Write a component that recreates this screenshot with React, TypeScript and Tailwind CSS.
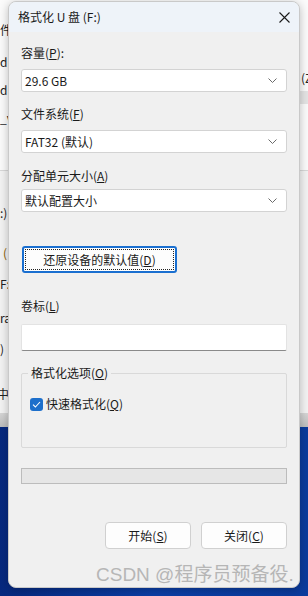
import React from "react";

const font = { fontFamily: '"Noto Sans CJK SC", "Noto Sans", sans-serif' };

function Chevron() {
  return (
    <svg width="9" height="5" viewBox="0 0 9 5" className="shrink-0">
      <path d="M0.5 0.5 L4.5 4.5 L8.5 0.5" fill="none" stroke="#6a6a6a" strokeWidth="1" />
    </svg>
  );
}

function Combo({ children }: { children: React.ReactNode }) {
  return (
    <div className="h-[23px] mx-[12px] bg-white border border-[#d3d3d3] rounded-[3px] flex items-center justify-between pl-[3px] pr-[9px] text-[12px] text-[#1a1a1a]">
      <span>{children}</span>
      <Chevron />
    </div>
  );
}

function Label({ children }: { children: React.ReactNode }) {
  return <div className="mx-[12px] text-[12px] text-[#1a1a1a] leading-[16px]">{children}</div>;
}

export default function App() {
  return (
    <div className="relative w-[308px] h-[596px] overflow-hidden" style={font}>
      {/* background: explorer window */}
      <div className="absolute inset-0 flex flex-col">
        <div className="h-[170px] bg-[#fbfbfb]" />
        <div className="h-[1px] bg-[#d8d8d8]" />
        <div className="h-[242px] bg-[#f3f3f3]" />
        <div className="h-[14px] bg-gradient-to-b from-[#d6d6d6] to-[#bdbdbd]" />
        <div className="flex-1 bg-gradient-to-r from-[#06287e] via-[#0b3ea6] to-[#0a3a9c]" />
      </div>
      {/* background text fragments */}
      <div className="absolute left-0 top-[22px] text-[12px] text-[#222] leading-[16px]">件</div>
      <div className="absolute left-0 top-[54px] text-[12px] text-[#222] leading-[16px]">dr</div>
      <div className="absolute left-0 top-[82px] text-[12px] text-[#222] leading-[16px]">dr</div>
      <div className="absolute left-0 top-[110px] text-[12px] text-[#222] leading-[16px]">_v</div>
      <div className="absolute left-0 top-[205px] text-[12px] text-[#222] leading-[16px]">:)</div>
      <div className="absolute left-[3px] top-[245px] text-[12px] text-[#8a5a00] leading-[16px]">(</div>
      <div className="absolute left-0 top-[276px] text-[12px] text-[#222] leading-[16px]">F:</div>
      <div className="absolute left-0 top-[310px] text-[12px] text-[#222] leading-[16px]">ra</div>
      <div className="absolute left-0 top-[341px] text-[12px] text-[#222] leading-[16px]">)</div>
      <div className="absolute left-[-3px] top-[386px] text-[12px] text-[#222] leading-[16px]">中</div>
      <div className="absolute left-[301px] top-[70px] text-[12px] text-[#222] leading-[16px]">(Z</div>
      <div className="absolute left-[300px] top-[91px] w-[8px] h-[13px] bg-[#e4e4e4]" />

      {/* dialog */}
      <div className="absolute left-[8px] top-[1px] w-[292px] h-[587px] rounded-[8px] bg-[#f0f0f0] border border-[#c9c9c9] shadow-[0_2px_10px_rgba(0,0,0,0.25)] overflow-hidden flex flex-col">
        <div className="h-[30px] bg-[#eef3f9] flex items-center justify-between pl-[9px] pr-[9px] shrink-0">
          <span className="text-[12px] text-[#1a1a1a]">格式化 U 盘 (F:)</span>
          <svg width="11" height="11" viewBox="0 0 11 11">
            <path d="M0.5 0.5 L10.5 10.5 M10.5 0.5 L0.5 10.5" stroke="#1a1a1a" strokeWidth="1.1" />
          </svg>
        </div>

        <div className="flex flex-col pt-[13px]">
          <Label>
            容量(<span className="underline">P</span>):
          </Label>
          <div className="h-[8px]" />
          <Combo>29.6 GB</Combo>
          <div className="h-[14px]" />
          <Label>
            文件系统(<span className="underline">F</span>)
          </Label>
          <div className="h-[8px]" />
          <Combo>FAT32 (默认)</Combo>
          <div className="h-[15px]" />
          <Label>
            分配单元大小(<span className="underline">A</span>)
          </Label>
          <div className="h-[5px]" />
          <Combo>默认配置大小</Combo>

          <div className="h-[34px]" />
          <div className="mx-[13px] w-[155px] h-[27px] rounded-[3px] border-2 border-[#1a6fd0] bg-[#fdfdfd] p-[1px]">
            <div className="w-full h-full border border-dotted border-[#222] flex items-center justify-center text-[12px] text-[#1a1a1a]">
              还原设备的默认值(<span className="underline">D</span>)
            </div>
          </div>

          <div className="h-[25px]" />
          <Label>
            卷标(<span className="underline">L</span>)
          </Label>
          <div className="h-[10px]" />
          <div className="mx-[12px] h-[27px] bg-white border border-[#e3e3e3] border-b-[#8a8a8a] rounded-[2px]" />

          <div className="h-[22px]" />
          <div className="relative mx-[12px] h-[75px] border border-[#d9d9d9] rounded-[2px]">
            <div className="absolute left-[6px] top-[-9px] px-[3px] bg-[#f0f0f0] text-[12px] text-[#1a1a1a] leading-[16px]">
              格式化选项(<span className="underline">O</span>)
            </div>
            <div className="flex items-center gap-[3px] pl-[8px] pt-[22px]">
              <div className="w-[13px] h-[13px] rounded-[3px] bg-[#1d6fcb] flex items-center justify-center">
                <svg width="9" height="7" viewBox="0 0 9 7">
                  <path d="M1 3.6 L3.4 6 L8 1" fill="none" stroke="white" strokeWidth="1.1" />
                </svg>
              </div>
              <span className="text-[12px] text-[#1a1a1a] leading-[16px]">
                快速格式化(<span className="underline">Q</span>)
              </span>
            </div>
          </div>

          <div className="h-[20px]" />
          <div className="mx-[12px] h-[16px] bg-[#e6e6e6] border border-[#bcbcbc]" />

          <div className="h-[38px]" />
          <div className="flex justify-end gap-[10px] mx-[12px]">
            <div className="w-[86px] h-[27px] bg-[#fdfdfd] border border-[#d0d0d0] rounded-[4px] flex items-center justify-center text-[12px] text-[#1a1a1a]">
              开始(<span className="underline">S</span>)
            </div>
            <div className="w-[86px] h-[27px] bg-[#fdfdfd] border border-[#d0d0d0] rounded-[4px] flex items-center justify-center text-[12px] text-[#1a1a1a]">
              关闭(<span className="underline">C</span>)
            </div>
          </div>
        </div>
      </div>

      {/* watermark */}
      <div className="absolute left-[96px] top-[563px] text-[19px] leading-[24px] text-[#b0b0b0] opacity-90 whitespace-nowrap" style={{ fontFamily: '"Liberation Sans", "Noto Sans CJK SC", sans-serif' }}>
        CSDN @程序员预备役.
      </div>
    </div>
  );
}
